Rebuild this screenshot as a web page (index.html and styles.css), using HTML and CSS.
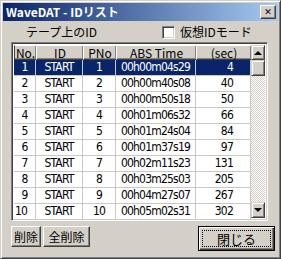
FILE: index.html
```html
<!DOCTYPE html>
<html lang="ja">
<head>
    <meta charset="UTF-8">
    <title>WaveDAT - IDリスト</title>
    <link rel="stylesheet" href="styles.css">
</head>
<body>

    <div class="window">
        <div class="titlebar">
            <span class="title">WaveDAT - IDリスト</span>
            <span class="close-btn">&#x2715;</span>
        </div>

        <div class="top-row">
            <span class="tape-label">テープ上のID</span>
            <label class="check"><span class="box"></span>仮想IDモード</label>
        </div>

        <div class="listview">
            <div class="grid">
                <div class="hd">No.</div>
                <div class="hd">ID</div>
                <div class="hd">PNo</div>
                <div class="hd">ABS Time</div>
                <div class="hd">(sec)</div>

                <div class="row selected"><span>1</span><span>START</span><span>1</span><span>00h00m04s29</span><span class="num">4</span></div>
                <div class="row"><span>2</span><span>START</span><span>2</span><span>00h00m40s08</span><span class="num">40</span></div>
                <div class="row"><span>3</span><span>START</span><span>3</span><span>00h00m50s18</span><span class="num">50</span></div>
                <div class="row"><span>4</span><span>START</span><span>4</span><span>00h01m06s32</span><span class="num">66</span></div>
                <div class="row"><span>5</span><span>START</span><span>5</span><span>00h01m24s04</span><span class="num">84</span></div>
                <div class="row"><span>6</span><span>START</span><span>6</span><span>00h01m37s19</span><span class="num">97</span></div>
                <div class="row"><span>7</span><span>START</span><span>7</span><span>00h02m11s23</span><span class="num">131</span></div>
                <div class="row"><span>8</span><span>START</span><span>8</span><span>00h03m25s03</span><span class="num">205</span></div>
                <div class="row"><span>9</span><span>START</span><span>9</span><span>00h04m27s07</span><span class="num">267</span></div>
                <div class="row"><span class="left">10</span><span>START</span><span>10</span><span>00h05m02s31</span><span class="num">302</span></div>
            </div>
            <div class="scrollbar">
                <div class="sb-btn"><span class="arrow up"></span></div>
                <div class="sb-thumb"></div>
                <div class="sb-track"></div>
                <div class="sb-btn"><span class="arrow down"></span></div>
            </div>
        </div>

        <div class="bottom-row">
            <button class="btn small">削除</button>
            <button class="btn wide">全削除</button>
            <button class="btn default"><span class="focus">閉じる</span></button>
        </div>
    </div>

</body>
</html>
```

FILE: styles.css
```css
body {
    margin: 0;
    font-family: "Noto Sans CJK JP", "DejaVu Sans", sans-serif;
    font-size: 12px;
    background: #d4d0c8;
}
.window {
    width: 281px;
    height: 259px;
    box-sizing: border-box;
    background: #d4d0c8;
    border: 1px solid;
    border-color: #d4d0c8 #404040 #404040 #d4d0c8;
    box-shadow: inset 1px 1px 0 #fff, inset -1px -1px 0 #808080;
    padding: 2px;
}
.titlebar {
    height: 18px;
    display: flex;
    align-items: center;
    justify-content: space-between;
    padding: 0 2px 0 3px;
    background: linear-gradient(to right, #0a246a, #a6caf0);
}
.title {
    color: #fff;
    font-weight: bold;
    font-size: 12px;
    line-height: 14px;
}
.close-btn {
    width: 16px;
    height: 14px;
    box-sizing: border-box;
    background: #d4d0c8;
    border: 1px solid;
    border-color: #fff #404040 #404040 #fff;
    box-shadow: inset -1px -1px 0 #808080;
    font-size: 9px;
    font-weight: bold;
    line-height: 12px;
    text-align: center;
    color: #000;
}
.top-row {
    height: 20px;
    display: flex;
    align-items: center;
    padding-left: 23px;
    margin-top: 1px;
}
.tape-label {
    width: 136px;
    line-height: 14px;
}
.check {
    display: flex;
    align-items: center;
    gap: 5px;
    line-height: 14px;
}
.box {
    width: 13px;
    height: 13px;
    box-sizing: border-box;
    background: #fff;
    border: 1px solid;
    border-color: #808080 #fff #fff #808080;
    box-shadow: inset 1px 1px 0 #404040, inset -1px -1px 0 #d4d0c8;
}
.listview {
    margin: 0 10px 0 8px;
    height: 179px;
    box-sizing: border-box;
    border: 1px solid;
    border-color: #808080 #fff #fff #808080;
    box-shadow: inset 1px 1px 0 #404040, inset -1px -1px 0 #d4d0c8;
    padding: 2px;
    display: flex;
    background: #fff;
}
.grid {
    display: grid;
    grid-template-columns: 22px 47px 33px 80px 55px;
    grid-template-rows: 15px;
    grid-auto-rows: 16px;
    align-content: start;
}
.hd {
    background: #d4d0c8;
    box-sizing: border-box;
    border-top: 1px solid #fff;
    border-left: 1px solid #fff;
    box-shadow: inset -1px -1px 0 #808080, 1px 0 0 #404040;
    border-bottom: 1px solid #404040;
    text-align: center;
    line-height: 13px;
}
.hd:first-child {
    border-left-color: #404040;
}
.row {
    display: contents;
}
.row span {
    box-sizing: border-box;
    border-right: 1px solid #c8c8c8;
    border-bottom: 1px solid #c8c8c8;
    text-align: center;
    line-height: 15px;
    color: #000;
    font-family: "DejaVu Sans Condensed", "Noto Sans CJK JP", sans-serif;
    font-size: 12px;
    letter-spacing: -0.8px;
    white-space: nowrap;
    overflow: hidden;
}
.row span.num {
    text-align: right;
    padding-right: 17px;
}
.row span.left {
    text-align: left;
    padding-left: 1px;
}
.row.selected span {
    background: #0a246a;
    color: #fff;
}
.scrollbar {
    width: 16px;
    display: flex;
    flex-direction: column;
}
.sb-btn, .sb-thumb {
    height: 16px;
    box-sizing: border-box;
    background: #d4d0c8;
    border: 1px solid;
    border-color: #d4d0c8 #404040 #404040 #d4d0c8;
    box-shadow: inset 1px 1px 0 #fff, inset -1px -1px 0 #808080;
    display: flex;
    align-items: center;
    justify-content: center;
}
.sb-btn:first-child {
    height: 15px;
}
.sb-track {
    flex: 1;
    background: repeating-conic-gradient(#d4d0c8 0 25%, #fff 0 50%) 0 0 / 2px 2px;
}
.arrow {
    width: 0;
    height: 0;
    border-left: 4px solid transparent;
    border-right: 4px solid transparent;
}
.arrow.up {
    border-bottom: 4px solid #000;
}
.arrow.down {
    border-top: 4px solid #000;
}
.bottom-row {
    display: flex;
    align-items: flex-start;
    margin: 5px 0 0 8px;
}
.btn {
    font-family: "Noto Sans CJK JP", sans-serif;
    font-size: 12px;
    height: 21px;
    padding: 0;
    background: #d4d0c8;
    color: #000;
    border: 1px solid;
    border-color: #fff #404040 #404040 #fff;
    box-shadow: inset -1px -1px 0 #808080;
    border-radius: 0;
    line-height: 17px;
}
.small {
    width: 30px;
}
.wide {
    width: 47px;
    margin-left: 2px;
}
.default {
    width: 77px;
    height: 25px;
    margin-left: auto;
    margin-right: 3px;
    border: 1px solid #000;
    box-shadow: inset 1px 1px 0 #fff, inset -1px -1px 0 #404040, inset -2px -2px 0 #808080;
    padding: 3px;
}
.focus {
    display: block;
    height: 100%;
    box-sizing: border-box;
    border: 1px dotted #000;
    line-height: 15px;
    font-size: 13px;
}
```
